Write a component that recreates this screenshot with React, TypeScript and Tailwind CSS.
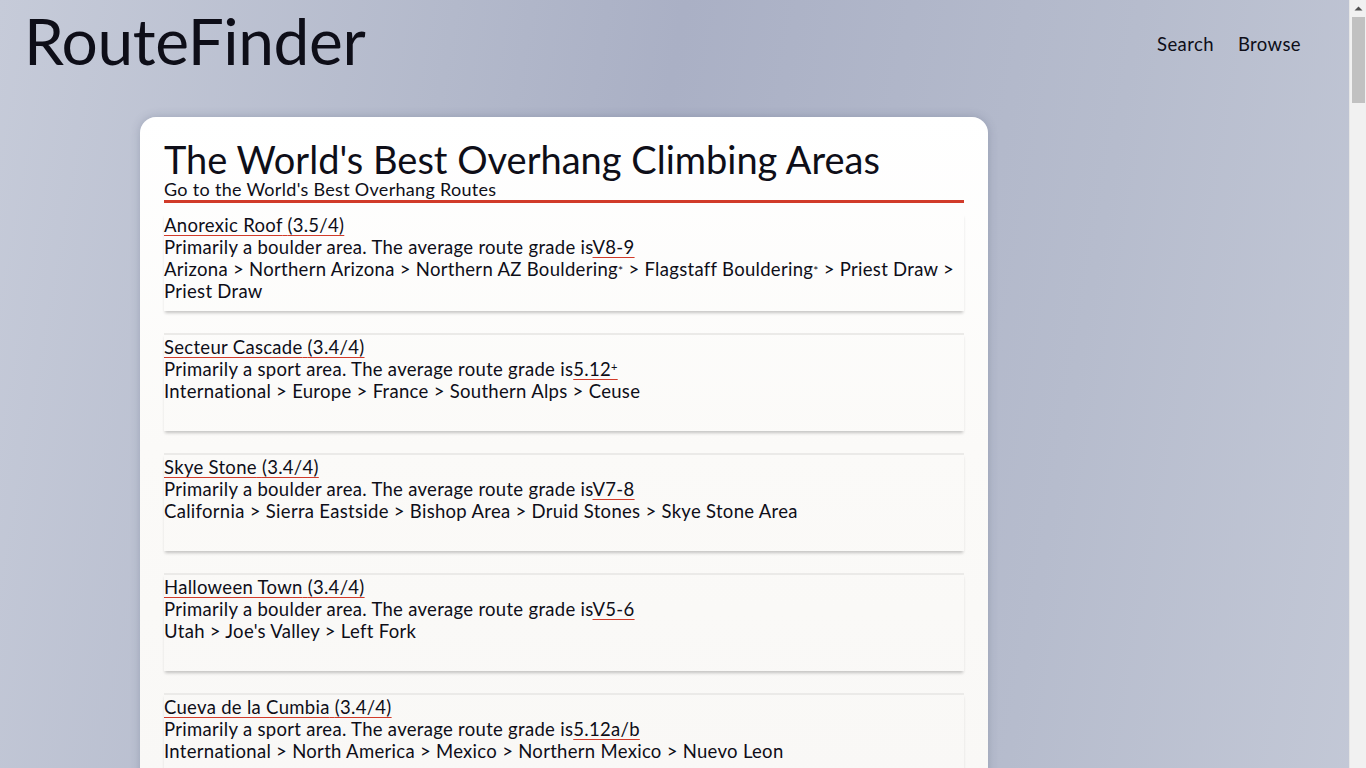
import React from "react";

type Item = {
  name: string;
  rating: string;
  kind: string;
  grade: React.ReactNode;
  path: React.ReactNode;
};

const Star = () => <sup className="text-[12px] relative top-[-1px]">*</sup>;

const items: Item[] = [
  {
    name: "Anorexic Roof",
    rating: "(3.5/4)",
    kind: "boulder",
    grade: "V8-9",
    path: (
      <>
        Arizona &gt; Northern Arizona &gt; Northern AZ Bouldering<Star /> &gt; Flagstaff Bouldering<Star /> &gt; Priest Draw &gt; Priest Draw
      </>
    ),
  },
  {
    name: "Secteur Cascade",
    rating: "(3.4/4)",
    kind: "sport",
    grade: (
      <>
        5.12<sup className="text-[11px]">+</sup>
      </>
    ),
    path: <>International &gt; Europe &gt; France &gt; Southern Alps &gt; Ceuse</>,
  },
  {
    name: "Skye Stone",
    rating: "(3.4/4)",
    kind: "boulder",
    grade: "V7-8",
    path: <>California &gt; Sierra Eastside &gt; Bishop Area &gt; Druid Stones &gt; Skye Stone Area</>,
  },
  {
    name: "Halloween Town",
    rating: "(3.4/4)",
    kind: "boulder",
    grade: "V5-6",
    path: <>Utah &gt; Joe's Valley &gt; Left Fork</>,
  },
  {
    name: "Cueva de la Cumbia",
    rating: "(3.4/4)",
    kind: "sport",
    grade: "5.12a/b",
    path: <>International &gt; North America &gt; Mexico &gt; Northern Mexico &gt; Nuevo Leon</>,
  },
  {
    name: "Hueco Tanks",
    rating: "(3.3/4)",
    kind: "boulder",
    grade: "V4-5",
    path: <>Texas &gt; Hueco Tanks</>,
  },
];

export default function App() {
  return (
    <div
      className="flex min-h-screen w-full text-[#0e0e18]"
      style={{ fontFamily: "Lato, 'Open Sans', sans-serif" }}
    >
      <div className="flex-1 min-w-0 bg-[linear-gradient(100deg,#c6cbd9_0%,#b3b9cb_30%,#aab0c5_45%,#b6bccd_75%,#c4c9d7_100%)]">
        <header className="flex items-start justify-between pl-[24px] pr-[48px]">
          <div className="text-[64px] leading-[1] pt-[9px] tracking-[-0.4px] font-normal">RouteFinder</div>
          <nav className="flex gap-[24px] pt-[31px] text-[18.5px] tracking-[0.4px]">
            <span>Search</span>
            <span>Browse</span>
          </nav>
        </header>
        <main className="pl-[140px] pt-[44px] pb-[40px]">
          <div className="w-[848px] rounded-[16px] bg-[linear-gradient(180deg,#ffffff_0%,#fbfaf8_40%,#f8f7f5_100%)] shadow-[0_0_10px_rgba(60,70,100,0.25)] px-[24px] pt-[22px] pb-[30px]">
            <h1 className="text-[38px] leading-[40px]">The World's Best Overhang Climbing Areas</h1>
            <div className="text-[18px] leading-[20px] tracking-[0.3px] border-b-[3px] border-[#d13b2a] pb-[1px]">
              Go to the World's Best Overhang Routes
            </div>
            <div className="flex flex-col gap-[22px] pt-[10px]">
              {items.map((it, i) => (
                <div
                  key={it.name}
                  className={
                    "min-h-[98px] pt-[1px] shadow-[0_3px_3px_-1px_rgba(0,0,0,0.22)] text-[18.5px] leading-[22px] tracking-[0.3px] " +
                    (i === 0 ? "" : "border-t-[2px] border-[#ebeae8]")
                  }
                >
                  <div>
                    <a className="underline decoration-[#d13b2a] decoration-1 underline-offset-[3px]">
                      {it.name} {it.rating}
                    </a>
                  </div>
                  <div>
                    Primarily a {it.kind} area. The average route grade is
                    <a className="underline decoration-[#d13b2a] decoration-1 underline-offset-[3px]">{it.grade}</a>
                  </div>
                  <div>{it.path}</div>
                </div>
              ))}
            </div>
          </div>
        </main>
      </div>
      <div className="w-[17px] shrink-0 bg-[#f1f1f1] border-l border-[#e6e6e6]">
        <div className="h-screen sticky top-0 flex flex-col items-center">
          <svg width="17" height="17" viewBox="0 0 17 17" className="shrink-0">
            <path d="M4.5 10.5 L8.5 6.5 L12.5 10.5 Z" fill="#505050" />
          </svg>
          <div className="w-[13px] h-[86px] bg-[#c1c1c1]" />
        </div>
      </div>
    </div>
  );
}
